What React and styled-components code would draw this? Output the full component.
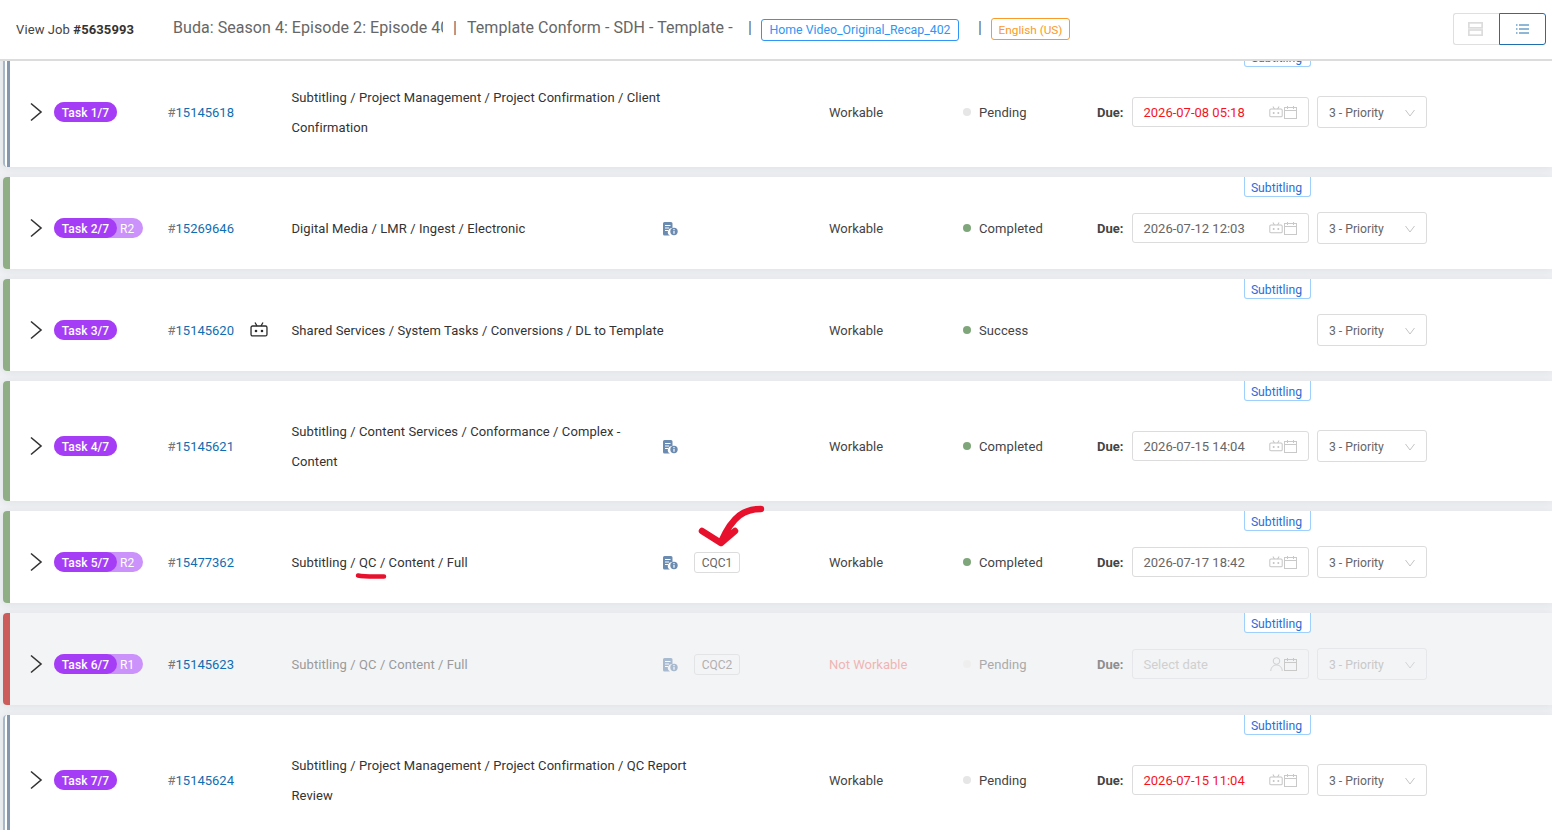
import React from "react";
import styled, { createGlobalStyle } from "styled-components";

const Global = createGlobalStyle`
  html, body { margin: 0; padding: 0; background: #fff; height: 100%; overflow: hidden; }
  body { font-family: Roboto, "Liberation Sans", sans-serif; font-size: 13px; color: #333; }
  * { box-sizing: border-box; }
`;

const Page = styled.div`
  width: 1552px; height: 830px; display: flex; flex-direction: column; overflow: hidden;
`;
const Header = styled.header`
  height: 61px; flex: none; display: flex; align-items: center; background: #fff;
  border-bottom: 2px solid #dcdcdc; padding: 0 6px 2px 16px; position: relative; z-index: 5;
`;
const JobLabel = styled.div`
  width: 157px; flex: none; font-size: 13px; color: #444; padding-top: 1px; letter-spacing: 0.1px;
  b { font-weight: 700; color: #333; }
`;
const Title = styled.div`
  font-size: 16px; color: #666; white-space: nowrap; overflow: hidden; flex: none;
  width: ${p => p.$w}px; letter-spacing: 0.05px; position: relative; top: -1px;
`;
const Sep = styled.span`
  font-size: 16px; color: #666; flex: none; width: ${p => p.$w}px; padding-left: ${p => p.$pad}px;
  position: relative; top: -1px;
`;
const HeadTag = styled.span`
  flex: none; height: 22px; display: inline-flex; align-items: center; justify-content: center;
  width: ${p => p.$w}px; border-radius: 3px; font-size: ${p => p.$fs}px; white-space: nowrap;
  padding-top: ${p => p.$pt || 0}px;
  color: ${p => p.$c}; border: 1px solid ${p => p.$c}; position: relative; top: ${p => p.$top}px;
`;
const Toggle = styled.div`
  margin-left: auto; display: flex; height: 32px;
`;
const ToggleBtn = styled.div`
  width: ${p => p.$w}px; display: flex; align-items: center; justify-content: center;
  border: 1px solid ${p => (p.$active ? "#1f6fae" : "#dfdfdf")};
  border-radius: ${p => (p.$active ? "0 3px 3px 0" : "3px 0 0 3px")};
  ${p => (p.$active ? "" : "border-right: none; padding-right: 2px;")}
`;
const List = styled.div`
  flex: 1; min-height: 0; overflow: hidden; background: #eef0f3;
`;
const Scroller = styled.div`
  margin-top: -14px; display: flex; flex-direction: column; gap: 10px;
`;
const Row = styled.div`
  position: relative; height: ${p => (p.$tall ? 120 : 92)}px; margin-left: 3px; flex: none;
  background: ${p => (p.$off ? "#f3f4f6" : "#fff")};
  box-shadow: 0 1px 8px rgba(40, 50, 70, 0.08);
  border-radius: 4px 0 0 4px; padding: 10px 0 0 27px;
  display: grid; align-items: center;
  grid-template-columns: 24px 114px 82px 41px 371px 32px 135px 134px 134px 35px 185px 110px;
`;
const Stripe = styled.div`
  position: absolute; left: 0; top: 0; bottom: 0; width: 7px; border-radius: 4px 0 0 4px;
  background: ${p => (p.$c === "none" ? "#fff" : p.$c)};
  ${p => p.$c === "none" ? "border-left: 2px solid #a9b8c9; border-right: 3px solid #8497ae;" : ""}
`;
const Chevron = styled.svg`
  display: block; grid-column: 1;
`;
const PillWrap = styled.div`
  grid-column: 2; display: inline-flex; width: fit-content; height: 20px; border-radius: 10px;
  background: #cb92fb; color: #fff; font-size: 12px; font-weight: 500; line-height: 22px;
`;
const PillMain = styled.span`
  background: #a63df6; border-radius: 10px; width: 63px; text-align: center; letter-spacing: 0.1px;
`;
const PillExtra = styled.span`
  width: 26px; padding-left: 3px; font-weight: 400;
`;
const TaskId = styled.div`
  grid-column: 3; font-size: 13px; color: #0f6db3; margin-left: -0.5px;
  span { color: #777; }
`;
const BotCell = styled.div`
  grid-column: 4; display: flex; padding-bottom: 1px;
`;
const Name = styled.div`
  grid-column: 5; line-height: 30px; color: ${p => (p.$off ? "#9a9a9a" : "#333")}; white-space: nowrap;
  letter-spacing: 0.08px; padding-top: 2px; margin-left: 0.5px;
`;
const InfoCell = styled.div`
  grid-column: 6; display: flex; padding-top: 1px; opacity: ${p => (p.$off ? 0.55 : 1)};
`;
const Code = styled.div`
  grid-column: 7; width: 46px; height: 21px; display: flex; align-items: center; justify-content: center;
  padding-top: 1px;
  border: 1px solid ${p => (p.$off ? "#e3e4e6" : "#dcdcdc")}; border-radius: 3px; font-size: 12px;
  color: ${p => (p.$off ? "#b0b0b0" : "#666")};
`;
const Work = styled.div`
  grid-column: 8; color: ${p => (p.$off ? "#f0b4b4" : "#444")};
`;
const Status = styled.div`
  grid-column: 9; display: flex; align-items: center; gap: 8px; letter-spacing: 0.08px;
  color: ${p => (p.$off ? "#aaa" : "#444")};
`;
const Dot = styled.i`
  width: 8px; height: 8px; border-radius: 50%; background: ${p => p.$c}; flex: none;
`;
const Due = styled.div`
  grid-column: 10; font-weight: 700; color: ${p => (p.$off ? "#8e8e8e" : "#444")};
`;
const DateBox = styled.div`
  grid-column: 11; width: 177px; height: 30px; display: flex; align-items: center; justify-content: space-between;
  padding: 0 11px 0 10.500px; border: 1px solid ${p => (p.$off ? "#e6e7ea" : "#dcdcdc")}; border-radius: 3px;
  color: ${p => p.$c}; background: ${p => (p.$off ? "#f3f4f6" : "#fff")};
`;
const DateIcons = styled.span`
  display: flex; align-items: center; gap: 1px;
`;
const Select = styled.div`
  grid-column: 12; width: 110px; height: 32px; display: flex; align-items: center; justify-content: space-between;
  padding: 2px 11px 0; border: 1px solid ${p => (p.$off ? "#e6e7ea" : "#dcdcdc")}; border-radius: 3px;
  color: ${p => (p.$off ? "#c8c8c8" : "#666")}; font-size: 12.200px;
`;
const TypeTag = styled.div`
  position: absolute; top: 0; left: 1241px; width: 67px; height: 20px; background: #fff; padding: 2px 2px 0 0;
  border: 1px solid #9fd0fb; border-top: none; border-radius: 0 0 3px 3px;
  display: flex; align-items: center; justify-content: center; font-size: 12.200px; color: #2b6fd8;
`;
const Note = styled.svg`
  position: absolute; pointer-events: none; overflow: visible; z-index: 3;
  left: ${p => p.$x}px; top: ${p => p.$y}px;
`;

const ChevronIcon = () => (
  <Chevron width="14" height="20" viewBox="0 0 14 20" fill="none">
    <path d="M1 1.500 L11 10 L1 18.500" stroke="#333" strokeWidth="1.600" />
  </Chevron>
);
const InfoIcon = () => (
  <svg width="16" height="14" viewBox="0 0 16 14">
    <path d="M1 1.500A1.500 1.500 0 0 1 2.500 0H9a1.500 1.500 0 0 1 1.500 1.500V6a4 4 0 0 0-2.500 7.500H2.500A1.500 1.500 0 0 1 1 12Z" fill="#6c8bb0" />
    <path d="M3 3.500h5.500M3 6h4M3 8.500h3" stroke="#fff" strokeWidth="1" />
    <circle cx="12" cy="9.500" r="3.700" fill="#6c8bb0" />
    <path d="M12 8.800v3M12 7v1" stroke="#fff" strokeWidth="1.200" />
  </svg>
);
const BotIcon = ({ c = "#2b2b2b", w = 18 }) => (
  <svg width={w} height={w * 0.83} viewBox="0 0 18 15" fill="none">
    <rect x="1" y="4" width="16" height="10" rx="1.500" stroke={c} strokeWidth="1.300" />
    <path d="M5 0.500 L7 4 M13 0.500 L11 4" stroke={c} strokeWidth="1.300" />
    <circle cx="6" cy="9" r="1.300" fill={c} />
    <circle cx="12" cy="9" r="1.300" fill={c} />
  </svg>
);
const CalIcon = ({ c = "#c9c9c9" }) => (
  <svg width="13" height="13" viewBox="0 0 13 13" fill="none">
    <rect x="0.500" y="1.500" width="12" height="11" stroke={c} />
    <path d="M0.500 4.500h12M3.500 0v3M9.500 0v3" stroke={c} />
  </svg>
);
const UserIcon = ({ c = "#cfcfcf" }) => (
  <svg width="13" height="14" viewBox="0 0 13 14" fill="none">
    <circle cx="6.500" cy="4" r="3.300" stroke={c} />
    <path d="M0.800 14c0-3.500 2.500-6 5.700-6s5.700 2.500 5.700 6" stroke={c} />
  </svg>
);
const DownIcon = ({ c = "#c4c4c4" }) => (
  <svg width="10" height="8" viewBox="0 0 10 8" fill="none">
    <path d="M0.500 1 L5 7 L9.500 1" stroke={c} />
  </svg>
);

const tasks = [
  { n: 1, id: "15145618", tall: true, stripe: "none", lines: ["Subtitling / Project Management / Project Confirmation / Client", "Confirmation"], dot: "#e6e6e6", status: "Pending", date: "2026-07-08 05:18", red: true },
  { n: 2, r: "R2", id: "15269646", stripe: "#8fae85", lines: ["Digital Media / LMR / Ingest / Electronic"], info: true, dot: "#7fa67a", status: "Completed", date: "2026-07-12 12:03" },
  { n: 3, id: "15145620", bot: true, stripe: "#8fae85", lines: ["Shared Services / System Tasks / Conversions / DL to Template"], dot: "#7fa67a", status: "Success" },
  { n: 4, id: "15145621", tall: true, stripe: "#8fae85", lines: ["Subtitling / Content Services / Conformance / Complex -", "Content"], info: true, dot: "#7fa67a", status: "Completed", date: "2026-07-15 14:04" },
  { n: 5, r: "R2", id: "15477362", stripe: "#8fae85", lines: ["Subtitling / QC / Content / Full"], info: true, code: "CQC1", dot: "#7fa67a", status: "Completed", date: "2026-07-17 18:42", notes: true },
  { n: 6, r: "R1", id: "15145623", off: true, stripe: "#cc5c5c", lines: ["Subtitling / QC / Content / Full"], info: true, code: "CQC2", dot: "#eeeeee", status: "Pending", date: "Select date" },
  { n: 7, id: "15145624", tall: true, stripe: "none", lines: ["Subtitling / Project Management / Project Confirmation / QC Report", "Review"], dot: "#e6e6e6", status: "Pending", date: "2026-07-15 11:04", red: true },
];

function TaskRow({ t }) {
  return (
    <Row $tall={t.tall} $off={t.off}>
      <Stripe $c={t.stripe} />
      <TypeTag>Subtitling</TypeTag>
      <ChevronIcon />
      <PillWrap>
        <PillMain>Task {t.n}/7</PillMain>
        {t.r && <PillExtra>{t.r}</PillExtra>}
      </PillWrap>
      <TaskId><span>#</span>{t.id}</TaskId>
      {t.bot && <BotCell><BotIcon /></BotCell>}
      <Name $off={t.off}>
        {t.lines.map(l => <div key={l}>{l}</div>)}
      </Name>
      {t.info && <InfoCell $off={t.off}><InfoIcon /></InfoCell>}
      {t.code && <Code $off={t.off}>{t.code}</Code>}
      <Work $off={t.off}>{t.off ? "Not Workable" : "Workable"}</Work>
      <Status $off={t.off}><Dot $c={t.dot} />{t.status}</Status>
      {t.date && <Due $off={t.off}>Due:</Due>}
      {t.date && (
        <DateBox $off={t.off} $c={t.off ? "#d0d0d0" : t.red ? "#f5141e" : "#666"}>
          {t.date}
          <DateIcons>
            {t.off ? <UserIcon /> : <BotIcon c="#c4c4c4" w={14} />}
            <CalIcon />
          </DateIcons>
        </DateBox>
      )}
      <Select $off={t.off}>3 - Priority<DownIcon c={t.off ? "#d4d4d4" : "#c4c4c4"} /></Select>
      {t.notes && (
        <>
          <Note $x={694} $y={-5} width="70" height="44" viewBox="0 0 70 44" fill="none">
            <path d="M64 3 C48 3 36 9 24 36 M5 25 L24 37 L38 25" stroke="#e8112d" strokeWidth="6.500" strokeLinecap="round" strokeLinejoin="round" />
          </Note>
          <Note $x={352} $y={62} width="34" height="6" viewBox="0 0 34 6" fill="none">
            <path d="M3 2.500 C10 4 20 3.500 29 3.500" stroke="#e8112d" strokeWidth="4.500" strokeLinecap="round" />
          </Note>
        </>
      )}
    </Row>
  );
}

export default function App() {
  return (
    <Page>
      <Global />
      <Header>
        <JobLabel>View Job <b>#5635993</b></JobLabel>
        <Title $w={270}>Buda: Season 4: Episode 2: Episode 402</Title>
        <Sep $w={24} $pad={10}>|</Sep>
        <Title $w={266}>Template Conform - SDH - Template -</Title>
        <Sep $w={28} $pad={15}>|</Sep>
        <HeadTag $w={198} $fs={12.300} $c="#2f96f5" $top={1}>Home Video_Original_Recap_402</HeadTag>
        <Sep $w={32} $pad={19}>|</Sep>
        <HeadTag $w={79} $fs={11.800} $c="#fa9a28" $top={0} $pt={2}>English (US)</HeadTag>
        <Toggle>
          <ToggleBtn $w={46}>
            <svg width="15" height="14" viewBox="0 0 15 14" fill="none" stroke="#dcdcdc" strokeWidth="1.700">
              <rect x="0.850" y="0.850" width="13.300" height="5" />
              <rect x="0.850" y="8" width="13.300" height="5.200" />
            </svg>
          </ToggleBtn>
          <ToggleBtn $w={47} $active>
            <svg width="13" height="10" viewBox="0 0 13 10" fill="none" stroke="#1f6fae">
              <path d="M3 1h10M3 5h10M3 9h10" />
              <path d="M0 1h1.500M0 5h1.500M0 9h1.500" />
            </svg>
          </ToggleBtn>
        </Toggle>
      </Header>
      <List>
        <Scroller>
          {tasks.map(t => <TaskRow key={t.n} t={t} />)}
        </Scroller>
      </List>
    </Page>
  );
}
